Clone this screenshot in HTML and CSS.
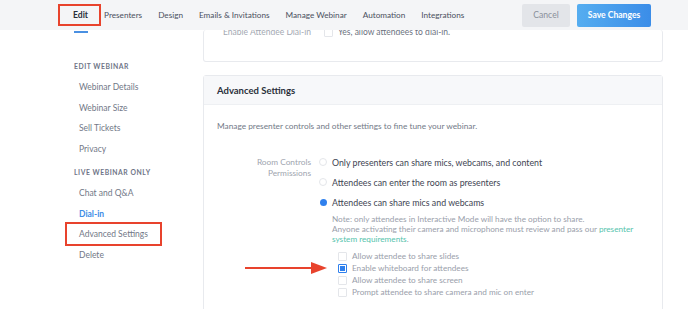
FILE: index.html
```html
<!DOCTYPE html>
<html>
<head>
<meta charset="utf-8">
<link rel="stylesheet" href="styles.css">
</head>
<body>
<header class="topbar">
  <nav class="tabs">
    <span class="tab tab-active mark">Edit</span>
    <span class="tab">Presenters</span>
    <span class="tab">Design</span>
    <span class="tab">Emails &amp; Invitations</span>
    <span class="tab">Manage Webinar</span>
    <span class="tab">Automation</span>
    <span class="tab">Integrations</span>
  </nav>
  <div class="actions">
    <button class="btn btn-cancel">Cancel</button>
    <button class="btn btn-save">Save Changes</button>
  </div>
</header>
<main class="layout">
  <aside class="sidebar">
    <div class="side-head">EDIT WEBINAR</div>
    <div class="side-item">Webinar Details</div>
    <div class="side-item">Webinar Size</div>
    <div class="side-item">Sell Tickets</div>
    <div class="side-item">Privacy</div>
    <div class="side-head second">LIVE WEBINAR ONLY</div>
    <div class="side-item">Chat and Q&amp;A</div>
    <div class="side-item active">Dial-in</div>
    <div class="side-item mark-side">Advanced Settings</div>
    <div class="side-item">Delete</div>
  </aside>
  <section class="content">
    <div class="card card-top">
      <div class="row-top">
        <div class="label-top">Enable Attendee Dial-in</div>
        <span class="cb"></span>
        <span class="top-text">Yes, allow attendees to dial-in.</span>
      </div>
    </div>
    <div class="card card-adv">
      <div class="card-head">Advanced Settings</div>
      <div class="card-body">
        <p class="desc">Manage presenter controls and other settings to fine tune your webinar.</p>
        <div class="form-row">
          <div class="form-label">Room Controls<br>Permissions</div>
          <div class="options">
            <div class="radio-row"><span class="radio"></span>Only presenters can share mics, webcams, and content</div>
            <div class="radio-row"><span class="radio"></span>Attendees can enter the room as presenters</div>
            <div class="radio-row"><span class="radio on"></span>Attendees can share mics and webcams</div>
            <div class="note">Note: only attendees in Interactive Mode will have the option to share.<br>Anyone activating their camera and microphone must review and pass our <span class="link">presenter system requirements</span>.</div>
            <div class="checks">
              <div class="check-row"><span class="cb"></span>Allow attendee to share slides</div>
              <div class="check-row"><span class="cb on"></span>Enable whiteboard for attendees</div>
              <div class="check-row"><span class="cb"></span>Allow attendee to share screen</div>
              <div class="check-row"><span class="cb"></span>Prompt attendee to share camera and mic on enter</div>
            </div>
          </div>
        </div>
        <svg class="arrow" width="82" height="12" viewBox="0 0 82 12"><line x1="0" y1="6" x2="68" y2="6" stroke="#e8432d" stroke-width="2"/><polygon points="66,0 82,6 66,12" fill="#e8432d"/></svg>
      </div>
    </div>
  </section>
</main>
</body>
</html>
```
FILE: styles.css
```css
* { box-sizing: border-box; }
html, body { margin: 0; padding: 0; background: #fff; }
body {
  width: 688px;
  height: 309px;
  overflow: hidden;
  font-family: "Lato", "Liberation Sans", sans-serif;
  color: #3b4150;
}
.topbar {
  position: relative;
  z-index: 2;
  height: 30px;
  background: #f4f5f7;
  display: flex;
  align-items: center;
  justify-content: space-between;
  padding-right: 37px;
}
.tabs {
  display: flex;
  align-items: center;
  padding-left: 58px;
  gap: 16px;
  font-size: 8.2px;
  color: #4a5060;
}
.tab { position: relative; }
.tab-active { color: #2a2f3a; font-weight: 700; font-size: 8.6px; }
.mark {
  border: 2px solid #e8432d;
  padding: 4px 11px 4px 13px;
  margin-right: -13px;
}
.tab-active::after {
  content: "";
  position: absolute;
  left: 14px;
  width: 14px;
  bottom: -9px;
  height: 2px;
  background: #4a90e2;
}
.actions { display: flex; gap: 7px; }
.btn {
  font-family: inherit;
  font-size: 8.6px;
  height: 23px;
  border: 0;
  border-radius: 2px;
  padding: 0;
}
.btn-cancel { width: 48px; background: #e3e5e9; color: #8a909b; }
.btn-save {
  width: 74px;
  background: linear-gradient(90deg, #55adf0, #3b8de8);
  color: #fff;
  font-weight: 700;
}
.layout {
  display: grid;
  grid-template-columns: 203px 460px;
}
.sidebar { padding: 31px 0 0 74px; }
.side-head {
  font-size: 6.8px;
  font-weight: 700;
  letter-spacing: 0.55px;
  color: #6f7587;
  height: 10px;
  line-height: 10px;
  margin-bottom: 11px;
}
.side-head.second { margin-top: 3px; margin-bottom: 11px; }
.side-item {
  font-size: 8.5px;
  color: #727887;
  height: 20.5px;
  line-height: 10px;
  padding-left: 5px;
}
.side-item.active { color: #3e8de6; font-weight: 700; }
.mark-side {
  border: 2px solid #e8432d;
  margin-left: -9px;
  width: 97px;
  height: 24px;
  padding: 5px 0 0 12px;
  margin-top: -7px;
  margin-bottom: 3.5px;
}
.card {
  border: 1px solid #e8eaee;
  border-radius: 3px;
  background: #fff;
}
.card-top {
  border-top: 0;
  height: 32px;
  overflow: hidden;
}
.row-top {
  display: flex;
  align-items: center;
  margin-top: -4px;
  height: 12px;
  font-size: 8.5px;
}
.label-top {
  width: 107px;
  flex: none;
  text-align: right;
  color: #a3a8b2;
}
.row-top .cb { margin-left: 13px; margin-right: 5px; }
.top-text { color: #6b7180; }
.card-adv { margin-top: 13px; height: 240px; }
.card-head {
  height: 29px;
  background: #f7f8fa;
  border-bottom: 1px solid #eef0f3;
  padding-left: 13px;
  font-size: 9.5px;
  font-weight: 700;
  color: #2b303b;
  line-height: 29px;
}
.card-body { position: relative; padding: 16px 13px 0 13px; }
.desc {
  margin: 0;
  font-size: 8.3px;
  color: #737a88;
  line-height: 10px;
}
.form-row { display: flex; margin-top: 26px; }
.form-label {
  flex: none;
  width: 94px;
  text-align: right;
  font-size: 8.3px;
  color: #a0a5af;
  line-height: 10.5px;
}
.options { padding-left: 8px; flex: 1; }
.radio-row {
  display: flex;
  align-items: center;
  height: 20px;
  margin-top: -5px;
  margin-bottom: 5px;
  font-size: 8.8px;
  color: #3e4452;
}
.radio {
  width: 8px;
  height: 8px;
  border-radius: 50%;
  border: 1px solid #e4e6ea;
  margin-right: 5px;
  flex: none;
}
.radio.on { border: 0; background: #2f80ed; width: 7px; height: 7px; margin-left: 0.5px; margin-right: 5.5px; }
.note {
  margin-top: -3px;
  padding-left: 13px;
  max-width: 323px;
  font-size: 8.2px;
  line-height: 10px;
  color: #9aa0ab;
}
.link { color: #54c3ad; }
.checks { margin-top: 6px; padding-left: 19px; }
.check-row {
  display: flex;
  align-items: center;
  height: 12px;
  font-size: 8.2px;
  color: #9aa0ab;
}
.cb {
  width: 9px;
  height: 9px;
  border: 1px solid #e4e6ea;
  border-radius: 1px;
  margin-right: 5px;
  flex: none;
  display: inline-block;
  background: #fff;
}
.cb.on { background: #2f80ed; border: 1px solid #2f80ed; box-shadow: inset 0 0 0 1px #fff; }
.arrow {
  position: absolute;
  left: 41px;
  top: 157px;
}
```
